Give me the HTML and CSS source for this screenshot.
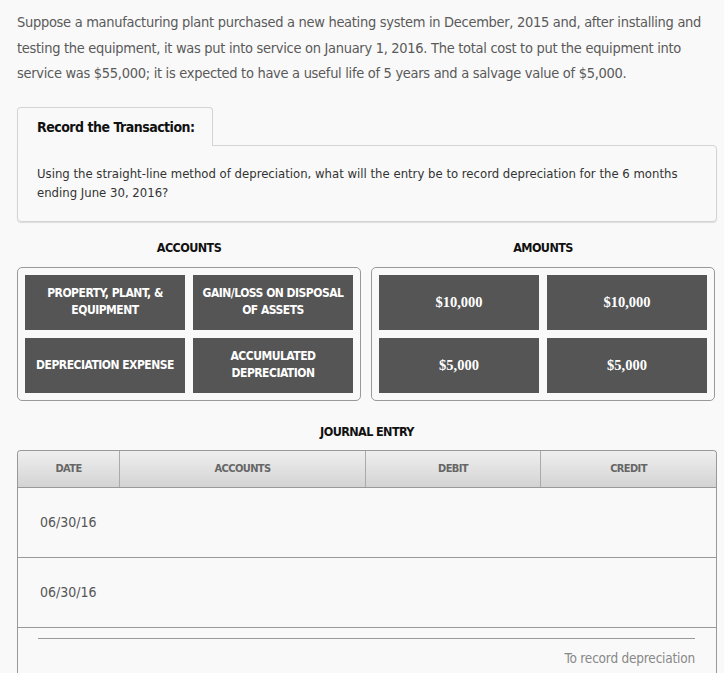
FILE: index.html
```html
<!DOCTYPE html>
<html lang="en">
<head>
    <meta charset="UTF-8">
    <meta name="viewport" content="width=device-width, initial-scale=1.0">
    <title>Record the Transaction</title>
    <link rel="stylesheet" href="styles.css">
</head>
<body>
    <p class="intro">
        Suppose a manufacturing plant purchased a new heating system in December, 2015 and, after installing and
        testing the equipment, it was put into service on January 1, 2016. The total cost to put the equipment into
        service was $55,000; it is expected to have a useful life of 5 years and a salvage value of $5,000.
    </p>

    <div class="tab">Record the Transaction:</div>
    <div class="panel">
        Using the straight-line method of depreciation, what will the entry be to record depreciation for the 6 months
        ending June 30, 2016?
    </div>

    <div class="choices">
        <div class="choice-group">
            <h3 class="group-title">ACCOUNTS</h3>
            <div class="tile-box">
                <div class="tile">PROPERTY, PLANT, &amp;<br>EQUIPMENT</div>
                <div class="tile">GAIN/LOSS ON DISPOSAL<br>OF ASSETS</div>
                <div class="tile">DEPRECIATION EXPENSE</div>
                <div class="tile">ACCUMULATED<br>DEPRECIATION</div>
            </div>
        </div>
        <div class="choice-group">
            <h3 class="group-title">AMOUNTS</h3>
            <div class="tile-box">
                <div class="tile amount">$10,000</div>
                <div class="tile amount">$10,000</div>
                <div class="tile amount">$5,000</div>
                <div class="tile amount">$5,000</div>
            </div>
        </div>
    </div>

    <h3 class="group-title journal-title">JOURNAL ENTRY</h3>
    <div class="journal">
        <div class="journal-head">
            <div class="col-date">DATE</div>
            <div class="col-accounts">ACCOUNTS</div>
            <div class="col-debit">DEBIT</div>
            <div class="col-credit">CREDIT</div>
        </div>
        <div class="journal-row">06/30/16</div>
        <div class="journal-row">06/30/16</div>
        <div class="journal-note">
            <div class="note-line"></div>
            <div class="note-text">To record depreciation</div>
        </div>
    </div>
</body>
</html>
```

FILE: styles.css
```css
body {
    margin: 0;
    padding: 0 7px 0 17px;
    background: #f9f9f9;
    font-family: "DejaVu Sans Condensed", "DejaVu Sans", sans-serif;
    font-stretch: condensed;
    color: #555;
}
.intro {
    margin: 0;
    padding-top: 10px;
    font-size: 14.5px;
    letter-spacing: -0.3px;
    line-height: 25.5px;
    color: #5a5a5a;
}
.tab {
    display: inline-block;
    margin-top: 20px;
    width: 156px;
    padding: 11px 19px 10px;
    border: 1px solid #d4d4d4;
    border-bottom: none;
    border-radius: 4px 4px 0 0;
    background: #f9f9f9;
    font-size: 14px;
    letter-spacing: -0.5px;
    line-height: 17px;
    white-space: nowrap;
    font-weight: bold;
    color: #111;
    position: relative;
    z-index: 1;
    margin-bottom: -1px;
}
.panel {
    border: 1px solid #d4d4d4;
    border-radius: 0 4px 4px 4px;
    padding: 18px 19px 19px;
    font-size: 13px;
    line-height: 19px;
    color: #333;
    box-shadow: 0 1px 1px #ddd;
}
.choices {
    display: flex;
    gap: 10px;
    margin-top: 18px;
}
.choice-group {
    flex: 0 0 344px;
}
.group-title {
    margin: 0 0 12px;
    text-align: center;
    font-size: 12.5px;
    letter-spacing: -0.6px;
    line-height: 15px;
    font-weight: bold;
    color: #111;
}
.tile-box {
    display: grid;
    grid-template-columns: 160px 160px;
    grid-auto-rows: 55px;
    gap: 8px;
    padding: 7px;
    border: 1px solid #999;
    border-radius: 5px;
}
.tile {
    display: flex;
    align-items: center;
    justify-content: center;
    text-align: center;
    background: #555;
    color: #fff;
    font-size: 12px;
    letter-spacing: -0.5px;
    font-weight: bold;
    line-height: 17px;
}
.tile.amount {
    font-family: "Liberation Serif", serif;
    font-size: 14.5px;
    letter-spacing: 0;
}
.journal-title {
    margin-top: 23px;
    margin-bottom: 11px;
    width: 700px;
}
.journal {
    width: 698px;
    border: 1px solid #999;
    border-bottom: none;
    border-radius: 4px 4px 0 0;
}
.journal-head {
    display: flex;
    height: 36px;
    background: linear-gradient(#efefef, #d3d3d3);
    border-bottom: 1px solid #999;
    border-radius: 4px 4px 0 0;
    font-size: 11px;
    letter-spacing: -0.6px;
    font-weight: bold;
    color: #666;
}
.journal-head div {
    display: flex;
    align-items: center;
    justify-content: center;
    border-right: 1px solid #aaa;
}
.journal-head .col-date { width: 101px; }
.journal-head .col-accounts { width: 245px; }
.journal-head .col-debit { width: 174px; }
.journal-head .col-credit { flex: 1; border-right: none; }
.journal-row {
    height: 69px;
    display: flex;
    align-items: center;
    padding-left: 22px;
    border-bottom: 1px solid #999;
    font-size: 14px;
    color: #555;
}
.journal-note {
    padding: 10px 21px 0 20px;
    height: 36px;
}
.note-line {
    border-top: 1px solid #999;
}
.note-text {
    margin-top: 11px;
    text-align: right;
    font-size: 13.5px;
    letter-spacing: -0.2px;
    color: #888;
}
```
